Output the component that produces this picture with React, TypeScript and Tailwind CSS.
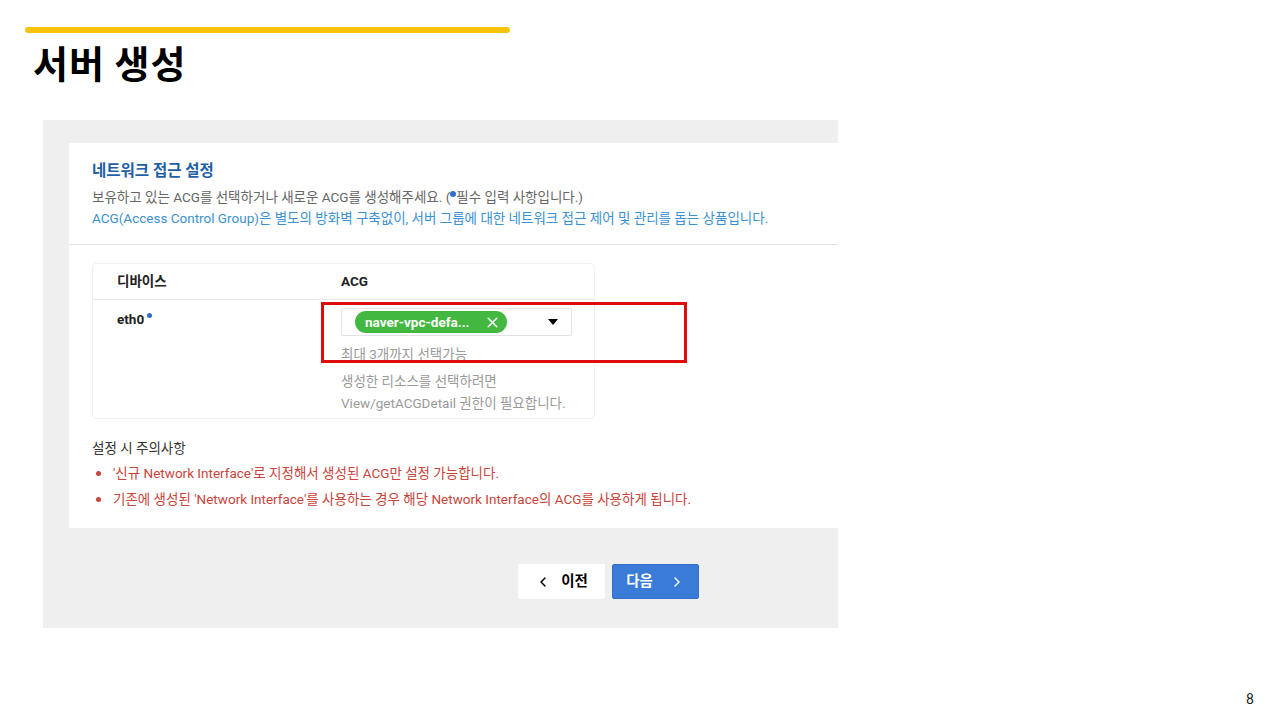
import { ChevronLeft, ChevronRight, X } from "lucide-react";

const font = { fontFamily: "Roboto, 'Noto Sans CJK KR', sans-serif" };

function AcgTag() {
  return (
    <div className="flex h-[22px] w-[152px] items-center justify-between rounded-full bg-[#43b840] pl-[10px] pr-[6px] text-[13.5px] font-bold text-white">
      <span>naver-vpc-defa...</span>
      <X className="h-[17px] w-[17px]" strokeWidth={2.2} />
    </div>
  );
}

export default function App() {
  return (
    <div className="relative h-[720px] w-[1280px] overflow-hidden bg-white" style={font}>
      {/* header */}
      <div className="ml-[25px] mt-[27px] h-[6px] w-[485px] rounded-full bg-[#f8c20b]" />
      <h1
        className="ml-[33px] mt-[5px] h-[48px] text-[38px] font-bold leading-[48px] tracking-[1px] text-black"
        style={{ fontFamily: "'Noto Sans CJK KR', sans-serif" }}
      >
        서버 생성
      </h1>

      {/* gray console panel */}
      <div className="ml-[43px] mt-[34px] flex h-[508px] w-[795px] flex-col bg-[#efefef] pl-[26px] pt-[23px]">
        <div className="h-[385px] bg-white">
          <div className="border-b border-[#e4e4e4] px-[23px] pb-[15px] pt-[17px]">
            <div className="text-[15.5px] font-bold leading-[22px] text-[#1f5fa6]">네트워크 접근 설정</div>
            <div className="mt-[5px] text-[13.5px] leading-[21px] text-[#666]">
              보유하고 있는 ACG를 선택하거나 새로운 ACG를 생성해주세요. (
              <span className="relative -top-[5px] inline-block h-[6px] w-[6px] rounded-full bg-[#2f6fd1]" />
              필수 입력 사항입니다.)
            </div>
            <div className="text-[13.5px] leading-[21px] text-[#3b91d2]">
              ACG(Access Control Group)은 별도의 방화벽 구축없이, 서버 그룹에 대한 네트워크 접근 제어 및 관리를 돕는 상품입니다.
            </div>
          </div>

          <div className="px-[23px] pt-[18px]">
            <div className="w-[503px] rounded-[4px] border border-[#f0f0f0]">
              <div className="flex h-[36px] items-center border-b border-[#e6e6e6] text-[13.5px] font-bold text-[#222]">
                <div className="w-[248px] pl-[24px]">디바이스</div>
                <div>ACG</div>
              </div>
              <div className="flex h-[118px] pt-[8px]">
                <div className="w-[248px] pl-[24px] pt-[2px] text-[13.5px] font-bold leading-[18px] text-[#222]">
                  eth0
                  <span className="relative -top-[6px] ml-[3px] inline-block h-[5px] w-[5px] rounded-full bg-[#2f6fd1]" />
                </div>
                <div className="flex flex-col">
                  <div className="flex h-[28px] w-[231px] items-center justify-between rounded-[2px] border border-[#e2e2e2] pl-[13px] pr-[13px]">
                    <AcgTag />
                    <span className="h-0 w-0 border-x-[5px] border-t-[6px] border-x-transparent border-t-black" />
                  </div>
                  <div className="mt-[9px] text-[13.5px] leading-[18px] text-[#9a9a9a]">최대 3개까지 선택가능</div>
                  <div className="mt-[7px] text-[13.5px] leading-[22px] text-[#9a9a9a]">
                    생성한 리소스를 선택하려면
                    <br />
                    View/getACGDetail 권한이 필요합니다.
                  </div>
                </div>
              </div>
            </div>
          </div>

          <div className="px-[23px] pt-[19px] text-[13.5px]">
            <div className="leading-[20px] text-[#333]">설정 시 주의사항</div>
            <ul className="mt-[2px] text-[#c9443b]">
              <li className="flex h-[26px] items-center">
                <span className="ml-[4px] mr-[12px] h-[5px] w-[5px] rounded-full bg-[#c9443b]" />
                '신규 Network Interface'로 지정해서 생성된 ACG만 설정 가능합니다.
              </li>
              <li className="flex h-[26px] items-center">
                <span className="ml-[4px] mr-[12px] h-[5px] w-[5px] rounded-full bg-[#c9443b]" />
                기존에 생성된 'Network Interface'를 사용하는 경우 해당 Network Interface의 ACG를 사용하게 됩니다.
              </li>
            </ul>
          </div>
        </div>

        {/* prev / next */}
        <div className="mt-[36px] flex gap-[7px] pl-[449px]">
          <button className="flex h-[35px] w-[87px] items-center justify-center gap-[10px] rounded-[2px] bg-white text-[14.5px] font-bold text-black">
            <ChevronLeft className="h-[16px] w-[16px]" strokeWidth={2.2} />
            이전
          </button>
          <button className="flex h-[35px] w-[87px] items-center justify-center gap-[16px] rounded-[2px] border border-[#3470c9] bg-[#3a7bd8] text-[14.5px] font-bold text-white">
            다음
            <ChevronRight className="h-[16px] w-[16px]" strokeWidth={2.2} />
          </button>
        </div>
      </div>

      {/* highlight around the ACG field */}
      <div className="absolute left-[321px] top-[302px] h-[61px] w-[366px] border-[3px] border-[#e00c0c]" />

      <div className="absolute left-[1246px] top-[689px] text-[14px] text-[#222]">8</div>
    </div>
  );
}
